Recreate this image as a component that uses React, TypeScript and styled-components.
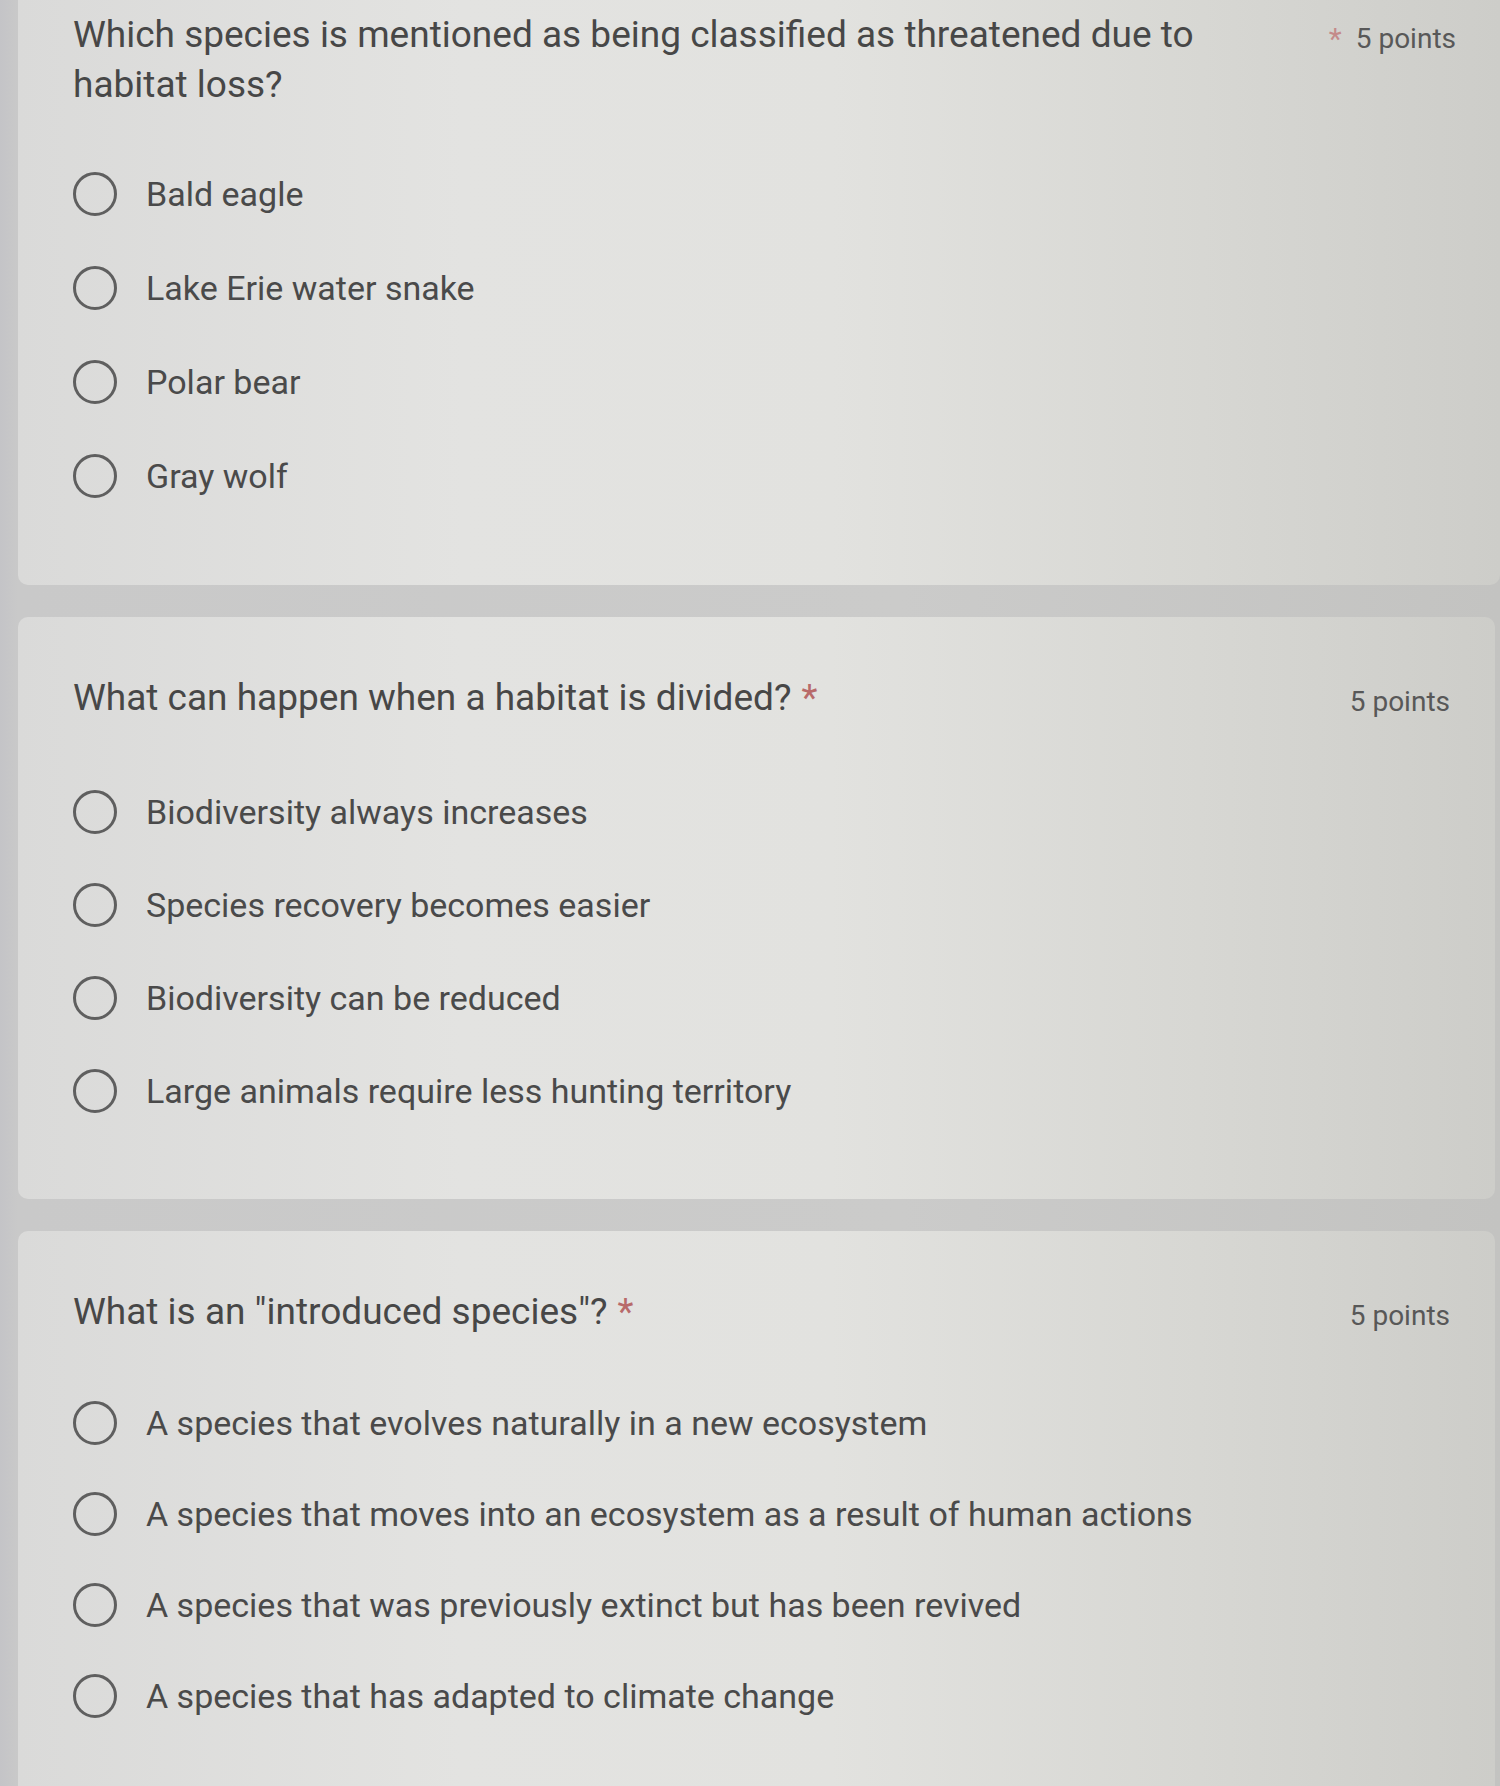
import React from 'react';
import styled, { createGlobalStyle } from 'styled-components';

const GlobalStyle = createGlobalStyle`
  html, body {
    margin: 0;
    padding: 0;
    background: #c9c9c9;
  }
  body {
    font-family: Roboto, "Noto Sans", Arial, sans-serif;
    color: #474747;
  }
`;

const Page = styled.div`
  width: 1500px;
  height: 1786px;
  overflow: hidden;
  box-sizing: border-box;
  padding: 0 5px 0 18px;
  display: flex;
  flex-direction: column;
  gap: 32px;
  background: linear-gradient(90deg, #c4c4c7 0px, #c9c9c9 18px, #cbcbca 60%, #c3c3c1 100%);
`;

const Card = styled.section<{ $cut?: boolean; $gap: number }>`
  flex-shrink: 0;
  box-sizing: border-box;
  margin-right: ${(p) => (p.$cut ? '-5px' : '0')};
  border-radius: ${(p) => (p.$cut ? '0 0 10px 10px' : '10px')};
  padding: ${(p) => (p.$cut ? '10px 44px' : '56px 45px')} 62px 55px;
  background: linear-gradient(90deg, #dadad9 0%, #e3e3e1 30%, #e2e2df 55%, #d7d7d3 80%, #cdcdc9 100%);
  display: flex;
  flex-direction: column;
  gap: ${(p) => p.$gap}px;
`;

const Header = styled.div`
  display: flex;
  align-items: flex-start;
  justify-content: space-between;
`;

const Title = styled.h2`
  margin: 0;
  max-width: 1180px;
  font-size: 37px;
  line-height: 50px;
  font-weight: 400;
  color: #474747;
`;

const Required = styled.span`
  color: #b86a6a;
  margin-left: 10px;
`;

const Meta = styled.div`
  display: flex;
  align-items: center;
  gap: 14px;
  margin-top: 13px;
  font-size: 28px;
  line-height: 32px;
  color: #585858;
  white-space: nowrap;
`;

const Star = styled.span`
  color: #c48a8a;
  font-size: 30px;
`;

const Options = styled.div`
  display: flex;
  flex-direction: column;
`;

const Option = styled.label<{ $row: number }>`
  display: flex;
  align-items: center;
  gap: 29px;
  height: ${(p) => p.$row}px;
  font-size: 34px;
  color: #4a4a4a;
`;

const Radio = styled.span`
  flex-shrink: 0;
  width: 44px;
  height: 44px;
  box-sizing: border-box;
  border: 3px solid #5f5f5f;
  border-radius: 50%;
`;

type Question = {
  title: string;
  starInMeta?: boolean;
  gap: number;
  row: number;
  options: string[];
};

const questions: Question[] = [
  {
    title: 'Which species is mentioned as being classified as threatened due to habitat loss?',
    starInMeta: true,
    gap: 37,
    row: 94,
    options: ['Bald eagle', 'Lake Erie water snake', 'Polar bear', 'Gray wolf'],
  },
  {
    title: 'What can happen when a habitat is divided?',
    gap: 42,
    row: 93,
    options: [
      'Biodiversity always increases',
      'Species recovery becomes easier',
      'Biodiversity can be reduced',
      'Large animals require less hunting territory',
    ],
  },
  {
    title: 'What is an "introduced species"?',
    gap: 40,
    row: 91,
    options: [
      'A species that evolves naturally in a new ecosystem',
      'A species that moves into an ecosystem as a result of human actions',
      'A species that was previously extinct but has been revived',
      'A species that has adapted to climate change',
    ],
  },
];

export default function App() {
  return (
    <>
      <GlobalStyle />
      <Page>
        {questions.map((q, i) => (
          <Card key={i} $cut={i === 0} $gap={q.gap}>
            <Header>
              <Title>
                {q.title}
                {!q.starInMeta && <Required>*</Required>}
              </Title>
              <Meta>
                {q.starInMeta && <Star>*</Star>}
                <span>5 points</span>
              </Meta>
            </Header>
            <Options>
              {q.options.map((o) => (
                <Option key={o} $row={q.row}>
                  <Radio />
                  {o}
                </Option>
              ))}
            </Options>
          </Card>
        ))}
      </Page>
    </>
  );
}
